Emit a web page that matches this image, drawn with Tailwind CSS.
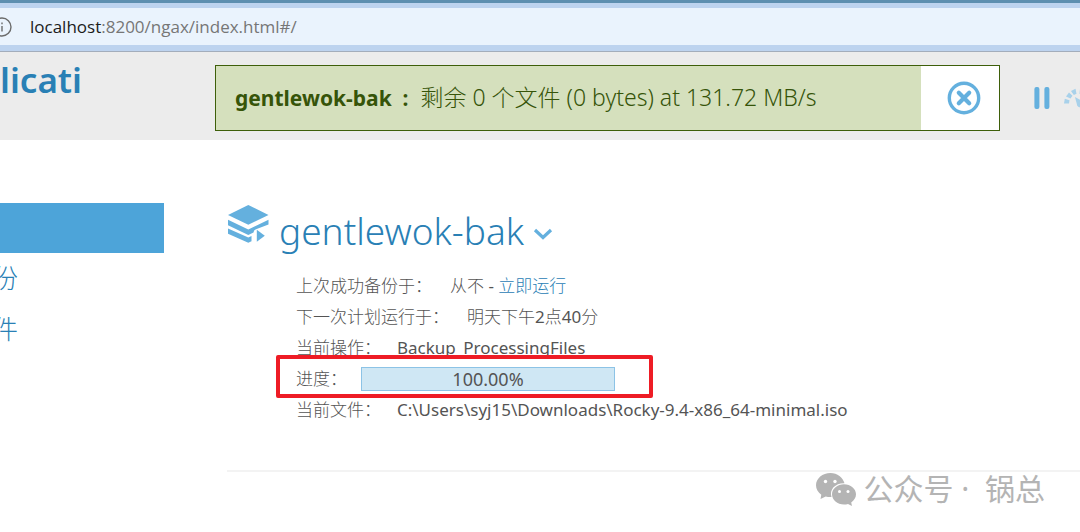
<!DOCTYPE html>
<html lang="zh-CN">

<head>
    <meta charset="UTF-8">
    <meta name="viewport" content="width=device-width, initial-scale=1.0">
    <title>Duplicati</title>
    <script src="https://cdn.jsdelivr.net/npm/@tailwindcss/browser@4"></script>
</head>

<body class="bg-white text-[#545454] overflow-x-hidden font-['Noto_Sans','Noto_Sans_CJK_SC',sans-serif]">
    <!-- address bar -->
    <div class="h-[52px] border-t-3 border-b border-t-[#5e8fb0] border-b-[#a3adbb] bg-[#bdd3ef] pt-[5px] pb-[6px]">
        <div class="h-full bg-[#eaf3fd] flex items-center gap-[18px] text-[#767676] font-['Open_Sans',sans-serif]">
            <svg class="w-5 h-5 -ml-2 shrink-0" viewBox="0 0 20 20" fill="none" stroke="#6b6b6b" stroke-width="1.4">
                <circle cx="10" cy="10" r="9" />
                <path d="M10 9v5.5M10 5.5v1.8" />
            </svg>
            <div class="text-[17px]"><span class="text-[#1b1b1b]">localhost</span>:8200/ngax/index.html#/</div>
        </div>
    </div>

    <header class="bg-[#ececec] h-[88px] flex overflow-hidden">
        <h1 class="w-[215px] shrink-0 pt-1 text-[35px] leading-[48px] font-semibold text-[#2980b5]">licati</h1>
        <div class="flex-1 mt-[13px] h-[66px] border border-[#3e5f0a] bg-[#d5e0bd] flex items-center text-[#365409]">
            <div class="flex-1 pl-[19px] pb-[2px] flex items-baseline gap-3 whitespace-nowrap">
                <strong class="text-[21px]">gentlewok-bak&nbsp; :</strong>
                <span class="text-[23px] font-light">剩余 0 个文件 (0 bytes) at 131.72 MB/s</span>
            </div>
            <button class="w-[78px] h-full bg-white flex items-center justify-center pl-2" aria-label="停止">
                <svg class="w-[34px] h-[34px]" viewBox="0 0 34 34" fill="none" stroke="#64b0de">
                    <circle cx="17" cy="17" r="14.7" stroke-width="3.4" />
                    <path d="M11.8 11.8l10.4 10.4M22.2 11.8L11.8 22.2" stroke-width="4.2" stroke-linecap="round" />
                </svg>
            </button>
        </div>
        <div class="w-20 shrink-0 pl-[34px] pt-[35px] flex gap-3 overflow-hidden">
            <button class="shrink-0 h-[22px]" aria-label="暂停">
                <svg class="w-4 h-[22px]" viewBox="0 0 16 22" fill="#64b0de">
                    <rect x="0.4" y="0" width="5" height="22" rx="2" />
                    <rect x="10.4" y="0" width="5" height="22" rx="2" />
                </svg>
            </button>
            <button class="shrink-0 h-[22px]" aria-label="限速">
                <svg class="w-8 h-[22px]" viewBox="0 0 32 22" fill="#a8d1ea">
                    <path d="M2 16.500l.8-4.800 4.700 1.500-.5 3.300z" />
                    <path d="M4 9.500l3-4 3.500 3.300-2 2.700z" />
                    <path d="M9 4l4.500-2.300 1 5-2.700 1.300z" />
                    <path d="M18 1.700l5 2.300-3 4-2.500-1.200z" />
                    <path d="M13 10l7.500 4.200a3.500 3.500 0 1 1-5.300 4.300z" />
                </svg>
            </button>
        </div>
    </header>

    <div class="flex pt-[63px]">
        <nav class="w-[164px] shrink-0 text-[26px] leading-[51px] font-light text-[#2980b5]">
            <a href="#/" class="block h-[50px] bg-[#4da4d9]" aria-label="首页"></a>
            <a href="#/addstart" class="block -ml-2">份</a>
            <a href="#/restorestart" class="block -ml-2">件</a>
        </nav>

        <main class="flex-1 ml-[63px]">
            <section class="border-b-2 border-[#f3f3f3] pb-[45px]">
                <h2 class="h-[67px] flex text-[37px] font-light text-[#2980b5]">
                    <svg class="w-[42px] h-10 mt-px shrink-0" viewBox="0 0 42 40" fill="#64b0de">
                        <path d="M21.300 1L41.500 11 21.300 20.800 1 11z" />
                        <path d="M1 15.800l20.300 9.700 20.200-9.700v4.700L29 25.200q-2.500 1-2.500 3.300l-5.200 2.500L1 21.200z" />
                        <path d="M1 24.500l20.300 9 3.200-1.500v5.300l-3.200 1.500L1 29.800z" />
                        <path d="M29.800 25.800l8 6-8 6z" />
                    </svg>
                    <a href="#" class="ml-[10px] leading-[56px]">gentlewok-bak</a>
                    <svg class="w-5 h-3 ml-[9px] mt-[25px]" viewBox="0 0 20 12" fill="none" stroke="#64b0de" stroke-width="3.2">
                        <path d="M2 2l8 7.5L18 2" />
                    </svg>
                </h2>

                <dl class="ml-[69px] text-[17px] leading-[31px]">
                    <div class="flex gap-[18px]">
                        <dt class="font-light">上次成功备份于：</dt>
                        <dd class="font-light">从不 <span class="font-normal">-</span> <a href="#" class="text-[#2980b5]">立即运行</a></dd>
                    </div>
                    <div class="flex gap-[18px]">
                        <dt class="font-light">下一次计划运行于：</dt>
                        <dd class="font-light">明天下午<span class="font-normal">2</span>点<span class="font-normal">40</span>分</dd>
                    </div>
                    <div class="flex gap-4">
                        <dt class="font-light">当前操作：</dt>
                        <dd>Backup_ProcessingFiles</dd>
                    </div>
                    <div class="relative flex items-center gap-[14px]">
                        <dt class="font-light">进度：</dt>
                        <dd class="w-[254px] h-6 border border-[#8cc3e6] bg-[#cfe7f4] text-center text-[18px] leading-[22px]"
                            role="progressbar" aria-valuenow="100">100.00%</dd>
                        <div class="absolute -left-5 -top-2 w-[377px] h-[43px] border-4 border-[#ee1c25] rounded-xs"></div>
                    </div>
                    <div class="flex gap-4">
                        <dt class="font-light">当前文件：</dt>
                        <dd>C:\Users\syj15\Downloads\Rocky-9.4-x86_64-minimal.iso</dd>
                    </div>
                </dl>
            </section>

            <footer class="flex justify-end items-center gap-2 pr-[35px] text-[30px] leading-[34px] text-[#b4b4b4]">
                <svg class="w-10 h-[33px]" viewBox="0 0 40 33" fill="#b4b4b4">
                    <path d="M14.5 0C6.500 0 0 5.500 0 12.300c0 3.900 2 7.200 5.300 9.400L4.500 26l5.200-2.600c1.500.4 3 .6 4.800.6h1C13 16.500 19.500 10 28.500 10.300 27 4.300 21.300 0 14.500 0z" />
                    <path d="M28 11.300c-6.600 0-12 4.500-12 10s5.400 10.200 12 10.200c1.400 0 2.800-.2 4-.6l4 2-.8-3.500c2.900-1.900 4.800-4.800 4.800-8.100 0-5.500-5.400-10-12-10z" />
                    <g fill="#fff">
                        <circle cx="9.500" cy="8.500" r="1.700" />
                        <circle cx="19" cy="8.500" r="1.700" />
                        <circle cx="23.500" cy="18.500" r="1.500" />
                        <circle cx="32" cy="18.500" r="1.500" />
                    </g>
                </svg>
                <span>公众号 ·&nbsp; 锅总</span>
            </footer>
        </main>
    </div>
</body>

</html>
